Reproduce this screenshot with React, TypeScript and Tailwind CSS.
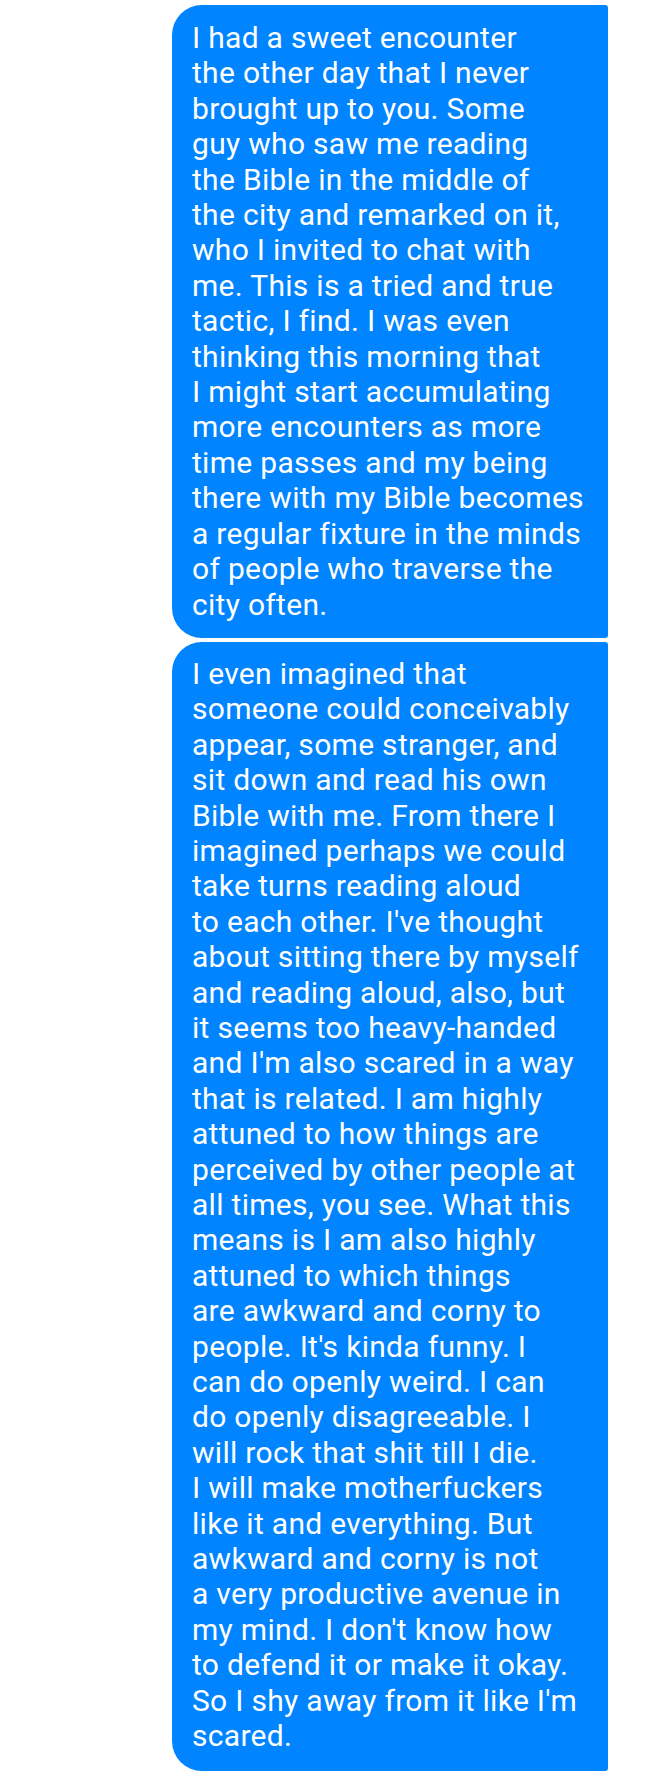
const first = [
  "I had a sweet encounter",
  "the other day that I never",
  "brought up to you. Some",
  "guy who saw me reading",
  "the Bible in the middle of",
  "the city and remarked on it,",
  "who I invited to chat with",
  "me. This is a tried and true",
  "tactic, I find. I was even",
  "thinking this morning that",
  "I might start accumulating",
  "more encounters as more",
  "time passes and my being",
  "there with my Bible becomes",
  "a regular fixture in the minds",
  "of people who traverse the",
  "city often.",
];

const second = [
  "I even imagined that",
  "someone could conceivably",
  "appear, some stranger, and",
  "sit down and read his own",
  "Bible with me. From there I",
  "imagined perhaps we could",
  "take turns reading aloud",
  "to each other. I've thought",
  "about sitting there by myself",
  "and reading aloud, also, but",
  "it seems too heavy-handed",
  "and I'm also scared in a way",
  "that is related. I am highly",
  "attuned to how things are",
  "perceived by other people at",
  "all times, you see. What this",
  "means is I am also highly",
  "attuned to which things",
  "are awkward and corny to",
  "people. It's kinda funny. I",
  "can do openly weird. I can",
  "do openly disagreeable. I",
  "will rock that shit till I die.",
  "I will make motherfuckers",
  "like it and everything. But",
  "awkward and corny is not",
  "a very productive avenue in",
  "my mind. I don't know how",
  "to defend it or make it okay.",
  "So I shy away from it like I'm",
  "scared.",
];

const Bubble = ({ lines, first }: { lines: string[]; first?: boolean }) => (
  <div
    className={`w-[436px] bg-[#0084ff] text-white rounded-l-[30px] rounded-r-[3px] pl-5 pr-3 ${
      first ? "pt-[15px] pb-[16px]" : "pt-[14px] pb-[17px]"
    }`}
  >
    {lines.map((l, i) => (
      <div key={i} className="whitespace-nowrap text-[30px] leading-[35.4px] tracking-[0.3px]">
        {l}
      </div>
    ))}
  </div>
);

export default function App() {
  return (
    <div
      className="w-[648px] h-[1777px] bg-white flex flex-col items-end pr-10 pt-[5px] gap-1"
      style={{ fontFamily: "Roboto, 'Noto Sans', sans-serif" }}
    >
      <Bubble lines={first} first />
      <Bubble lines={second} />
    </div>
  );
}
